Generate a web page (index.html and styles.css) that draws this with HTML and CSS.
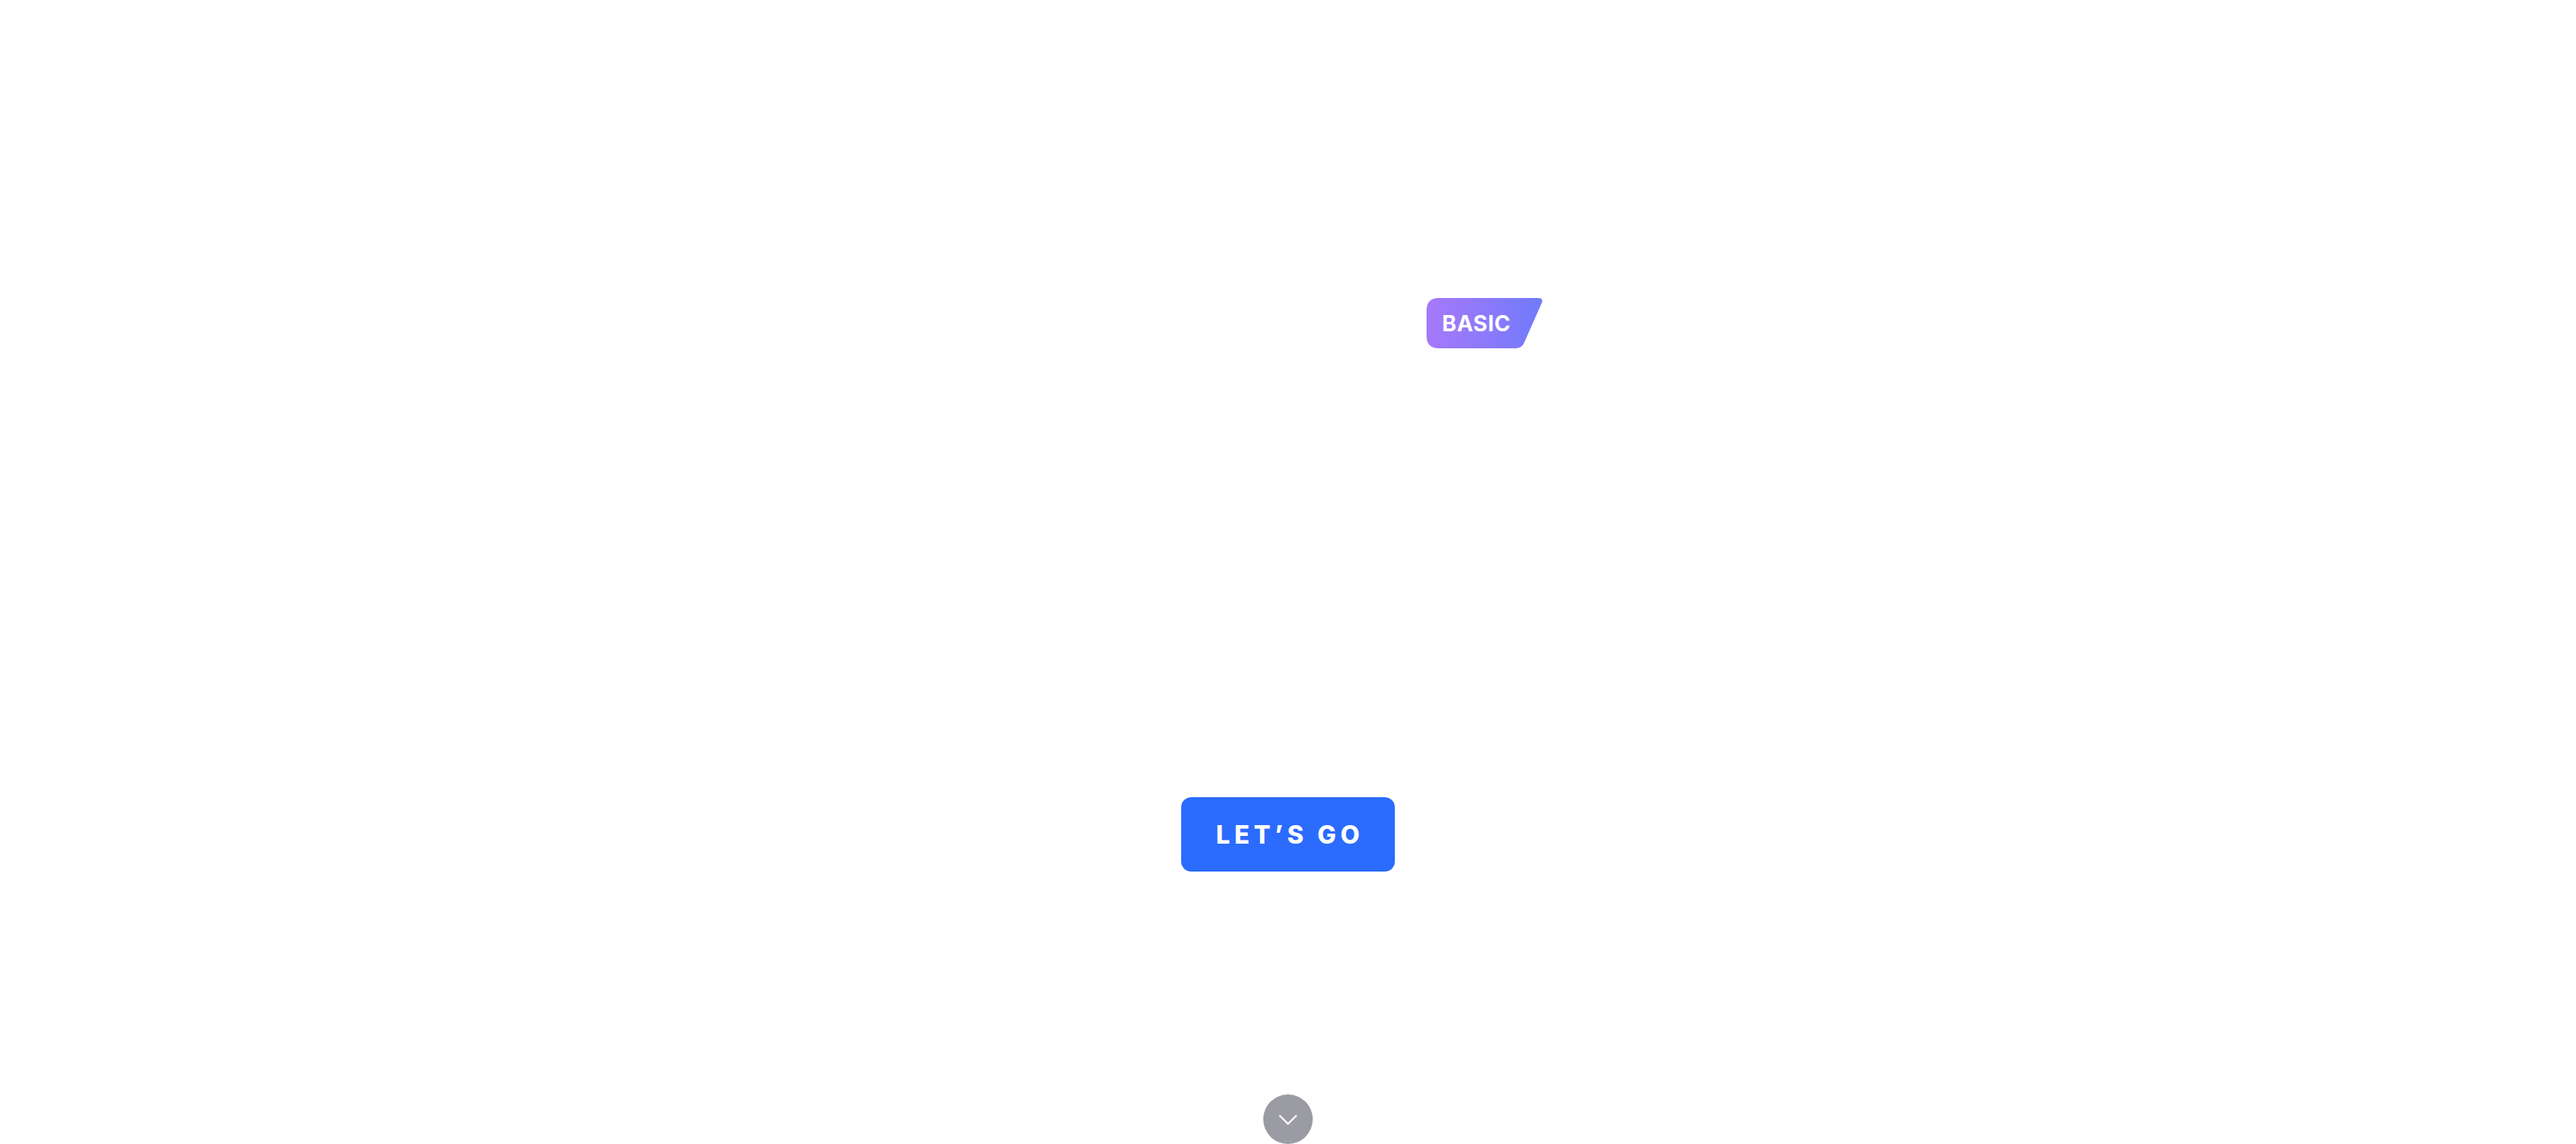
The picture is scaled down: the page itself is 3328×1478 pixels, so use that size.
FILE: index.html
```html
<!DOCTYPE html>
<html lang="en">
<head>
<meta charset="utf-8">
<title>Basic</title>
<link rel="stylesheet" href="styles.css">
</head>
<body>
<main class="hero">
  <div class="brand-row">
    <span class="badge">BASIC</span>
  </div>
  <a class="cta" href="#">LET’S GO</a>
  <a class="scroll-down" href="#" aria-label="Scroll down">
    <svg width="24" height="14" viewBox="0 0 24 14" aria-hidden="true">
      <path d="M1.5 1.5 L12 12 L22.5 1.5" fill="none" stroke="#ffffff" stroke-width="2.4" stroke-linecap="round" stroke-linejoin="round"/>
    </svg>
  </a>
</main>
</body>
</html>
```
FILE: styles.css
```css
html, body {
  margin: 0;
  padding: 0;
  background: #ffffff;
}

body {
  font-family: Inter, "Noto Sans", "Liberation Sans", sans-serif;
  overflow: hidden;
  height: 1478px;
}

.hero {
  height: 1478px;
  display: flex;
  flex-direction: column;
  align-items: center;
  padding-top: 385px;
  box-sizing: border-box;
}

.brand-row {
  display: flex;
  justify-content: flex-end;
  width: 658px;
  height: 65px;
}

.badge {
  width: 150px;
  height: 65px;
  box-sizing: border-box;
  padding-left: 20px;
  display: flex;
  align-items: center;
  color: #ffffff;
  font-weight: 700;
  font-size: 28px;
  letter-spacing: 0.6px;
  background: linear-gradient(90deg, #a778fa 0%, #8a7afb 55%, #6f7afc 100%);
  clip-path: path('M16 0 H144 Q152 0 148.5 7 L126 58 Q123 65 115 65 H16 Q0 65 0 49 V16 Q0 0 16 0 Z');
}

.cta {
  margin-top: 580px;
  width: 276px;
  height: 96px;
  border-radius: 13px;
  background: #2b6bfe;
  color: #ffffff;
  text-decoration: none;
  display: flex;
  align-items: center;
  justify-content: center;
  font-weight: 800;
  font-size: 32px;
  letter-spacing: 5.5px;
  padding-left: 5px;
  box-sizing: border-box;
}

.scroll-down {
  margin-top: 288px;
  width: 64px;
  height: 64px;
  border-radius: 50%;
  background: #9b9ba3;
  display: flex;
  align-items: center;
  justify-content: center;
}

.scroll-down svg {
  margin-top: 2px;
}
```
